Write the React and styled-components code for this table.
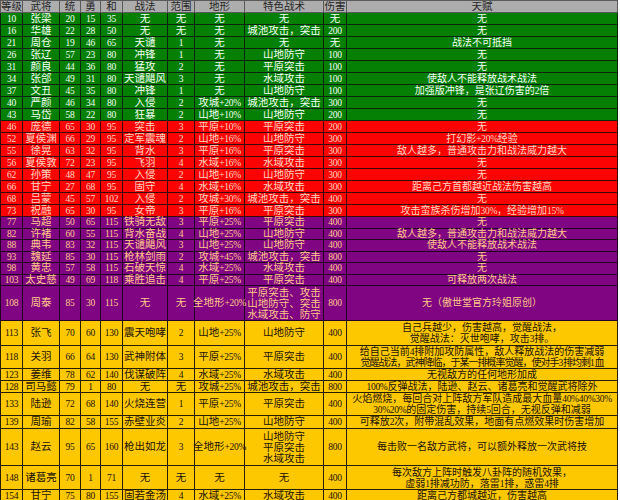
import React from 'react';
import styled, { createGlobalStyle } from 'styled-components';

const GlobalStyle = createGlobalStyle`
  html, body {
    margin: 0;
    padding: 0;
    background: #fff;
  }
  body {
    font-family: "Liberation Serif", "Noto Sans CJK SC", serif;
  }
`;

const tones = {
  head: { bg: '#adadad', fg: '#262626', line: '#5a5a5a' },
  green: { bg: '#058005', fg: '#f4fff4', line: '#0c240c' },
  red: { bg: '#fc0303', fg: '#ffd6c2', line: '#3a0a0a' },
  purple: { bg: '#800582', fg: '#ffc98a', line: '#220522' },
  yellow: { bg: '#fdc800', fg: '#1c1200', line: '#2a1e00' },
};

const widths = [22, 37, 21, 20, 22, 45, 27, 50, 79, 23, 271];
const heads = ['等级', '武将', '统', '勇', '和', '战法', '范围', '地形', '特色战术', '伤害', '天赋'];

const rows = [
  { tone: 'green', h: 12, c: ['10', '张梁', '20', '15', '35', '无', '无', '无', '无', '无', '无'] },
  { tone: 'green', h: 12, c: ['16', '华雄', '22', '28', '50', '无', '无', '无', '城池攻击，突击', '200', '无'] },
  { tone: 'green', h: 12, c: ['21', '周仓', '19', '46', '65', '天谴', '1', '无', '无', '无', '战法不可抵挡'] },
  { tone: 'green', h: 12, c: ['26', '张辽', '57', '23', '80', '冲锋', '1', '无', '山地防守', '100', '无'] },
  { tone: 'green', h: 12, c: ['31', '颜良', '44', '36', '80', '猛攻', '2', '无', '平原突击', '100', '无'] },
  { tone: 'green', h: 12, c: ['34', '张郃', '49', '31', '80', '天谴飓风', '3', '无', '水域攻击', '100', '使敌人不能释放战术战法'] },
  { tone: 'green', h: 12, c: ['37', '文丑', '45', '35', '80', '冲锋', '1', '无', '山地防守', '100', '加强版冲锋，是张辽伤害的2倍'] },
  { tone: 'green', h: 12, c: ['40', '严颜', '46', '34', '80', '入侵', '2', '攻城+20%', '城池攻击，突击', '300', '无'] },
  { tone: 'green', h: 12, c: ['43', '马岱', '58', '22', '80', '狂暴', '2', '山地+10%', '山地防守', '200', '无'] },
  { tone: 'red', h: 12, c: ['46', '庞德', '65', '30', '95', '突击', '3', '平原+10%', '平原突击', '200', '无'] },
  { tone: 'red', h: 12, c: ['52', '夏侯渊', '66', '29', '95', '定军震魂', '2', '山地+16%', '山地防守', '300', '打幻影+20%经验'] },
  { tone: 'red', h: 12, c: ['55', '徐晃', '63', '32', '95', '背水', '3', '平原+16%', '平原突击', '300', '敌人越多，普通攻击力和战法威力越大'] },
  { tone: 'red', h: 12, c: ['56', '夏侯敦', '72', '23', '95', '飞羽', '4', '水域+16%', '水域攻击', '300', '无'] },
  { tone: 'red', h: 12, c: ['62', '孙策', '48', '47', '95', '入侵', '2', '山地+16%', '山地防守', '300', '无'] },
  { tone: 'red', h: 12, c: ['66', '甘宁', '27', '68', '95', '固守', '4', '水域+16%', '水域攻击', '300', '距离己方首都越近战法伤害越高'] },
  { tone: 'red', h: 12, c: ['68', '吕蒙', '45', '57', '102', '入侵', '2', '攻城+30%', '城池攻击，突击', '400', '无'] },
  { tone: 'red', h: 12, c: ['73', '祝融', '65', '30', '95', '女帝', '3', '平原+16%', '平原突击', '300', '攻击蛮族杀伤增加30%，经验增加15%'] },
  { tone: 'purple', h: 11.5, c: ['77', '马超', '50', '65', '115', '铁骑无敌', '3', '平原+25%', '平原突击', '400', '无'] },
  { tone: 'purple', h: 11.5, c: ['82', '许褚', '60', '55', '115', '背水奋战', '4', '山地+25%', '山地防守', '400', '敌人越多，普通攻击力和战法威力越大'] },
  { tone: 'purple', h: 11.5, c: ['88', '典韦', '83', '32', '115', '天谴飓风', '3', '山地+25%', '山地防守', '400', '使敌人不能释放战术战法'] },
  { tone: 'purple', h: 11.5, c: ['93', '魏延', '85', '30', '115', '枪林剑雨', '2', '攻城+45%', '城池攻击，突击', '800', '无'] },
  { tone: 'purple', h: 11.5, c: ['98', '黄忠', '57', '58', '115', '石破天惊', '4', '水域+25%', '水域攻击', '400', '无'] },
  { tone: 'purple', h: 11.5, c: ['103', '太史慈', '49', '69', '118', '乘胜追击', '4', '平原+25%', '平原突击', '400', '可释放两次战法'] },
  {
    tone: 'purple', h: 35,
    c: ['108', '周泰', '85', '30', '115', '无', '无', '全地形+20%', ['平原突击、攻击', '山地防守、突击', '水域攻击、防守'], '800', '无（傲世堂官方玲姐原创）'],
  },
  {
    tone: 'yellow', h: 25,
    c: ['113', '张飞', '70', '60', '130', '震天咆哮', '2', '山地+25%', '山地防守', '400', ['自己兵越少，伤害越高，觉醒战法，', '觉醒战法：灭世咆哮，攻击3排。']],
  },
  {
    tone: 'yellow', h: 22,
    c: ['118', '关羽', '66', '64', '130', '武神附体', '3', '平原+25%', '平原突击', '400',
      ['给自己当前4排附加攻防属性，敌人释放战法的伤害减弱', { text: '觉醒战法，武神降临，于某一排概率觉醒，使对手3排均剩1血', tight: true }]],
  },
  { tone: 'yellow', h: 12, c: ['123', '姜维', '78', '62', '140', '伐谋破阵', '4', '水域+25%', '水域攻击', '400', '无视敌方的任何地形加成'] },
  { tone: 'yellow', h: 12, c: ['128', '司马懿', '79', '1', '80', '无', '无', '攻城+25%', '城池攻击，突击', '800', '100%反弹战法，陆逊、赵云、诸葛亮和觉醒武将除外'] },
  {
    tone: 'yellow', h: 23,
    c: ['133', '陆逊', '72', '68', '140', '火烧连营', '1', '平原+25%', '平原突击', '400',
      ['火焰燃烧，每回合对上阵敌方军队造成最大血量40%40%30%', '30%20%的固定伤害，持续5回合，无视反弹和减弱']],
  },
  { tone: 'yellow', h: 13, c: ['139', '周瑜', '82', '58', '155', '赤壁业炎', '2', '山地+25%', '山地防守', '400', '可释放2次，附带混乱效果，地面有点燃效果时伤害增加'] },
  {
    tone: 'yellow', h: 37,
    c: ['143', '赵云', '95', '65', '160', '枪出如龙', '3', '全地形+20%', ['山地防守', '平原突击', '水域攻击'], '800', '每击败一名敌方武将，可以额外释放一次武将技'],
  },
  {
    tone: 'yellow', h: 24,
    c: ['148', '诸葛亮', '70', '1', '71', '无', '无', '无', '无', '400', ['每次敌方上阵时触发八卦阵的随机效果，', '虚弱1排减功防，落雷1排，惑雷4排']],
  },
  { tone: 'yellow', h: 12, c: ['154', '甘宁', '75', '80', '155', '固若金汤', '4', '水域+25%', '水域攻击', '400', '距离己方都城越近，伤害越高'] },
];

const Sheet = styled.table`
  border-collapse: collapse;
  table-layout: fixed;
  width: 617px;
  font-size: 10.5px;
`;

const Row = styled.tr`
  height: ${p => p.$h}px;
  background: ${p => tones[p.$tone].bg};
  color: ${p => tones[p.$tone].fg};
`;

const Cell = styled.td`
  border: 1px solid ${p => tones[p.$tone].line};
  padding: 0;
  text-align: center;
  vertical-align: middle;
  line-height: 8px;
  white-space: nowrap;
  font-size: ${p => (p.$talent ? '10px' : '10.5px')};
`;

/* lets a slightly too long text spill evenly over both borders */
const Fit = styled.span`
  display: block;
  margin: 0 -5px;
`;

const HeadCell = styled.th`
  border: 1px solid ${tones.head.line};
  padding: 0;
  font-weight: normal;
  line-height: 8px;
  text-align: center;
  white-space: nowrap;
  overflow: hidden;
`;

const Line = styled.span`
  display: block;
  height: 11px;
  line-height: 11px;
  letter-spacing: ${p => (p.$tight ? '-1px' : '0')};
`;

const Latin = styled.span`
  font-size: 9.5px;
  letter-spacing: -0.3px;
`;

const ascii = /^[\x20-\x7e]+$/;

const split = s =>
  s.split(/([\x20-\x7e]+)/).filter(Boolean).map((part, i) =>
    ascii.test(part) ? <Latin key={i}>{part}</Latin> : part
  );

const content = v => {
  if (!Array.isArray(v)) return split(v);
  return v.map((l, i) => {
    const text = typeof l === 'string' ? l : l.text;
    return (
      <Line key={i} $tight={l.tight}>
        {split(text)}
      </Line>
    );
  });
};

export default function App() {
  return (
    <>
      <GlobalStyle />
      <Sheet>
        <colgroup>
          {widths.map((w, i) => (
            <col key={i} style={{ width: w }} />
          ))}
        </colgroup>
        <thead>
          <Row $tone="head" $h={12}>
            {heads.map(h => (
              <HeadCell key={h}>{h}</HeadCell>
            ))}
          </Row>
        </thead>
        <tbody>
          {rows.map(r => (
            <Row key={r.c[0]} $tone={r.tone} $h={r.h}>
              {r.c.map((v, i) => (
                <Cell key={i} $tone={r.tone} $talent={i === 10}>
                  <Fit>{content(v)}</Fit>
                </Cell>
              ))}
            </Row>
          ))}
        </tbody>
      </Sheet>
    </>
  );
}
